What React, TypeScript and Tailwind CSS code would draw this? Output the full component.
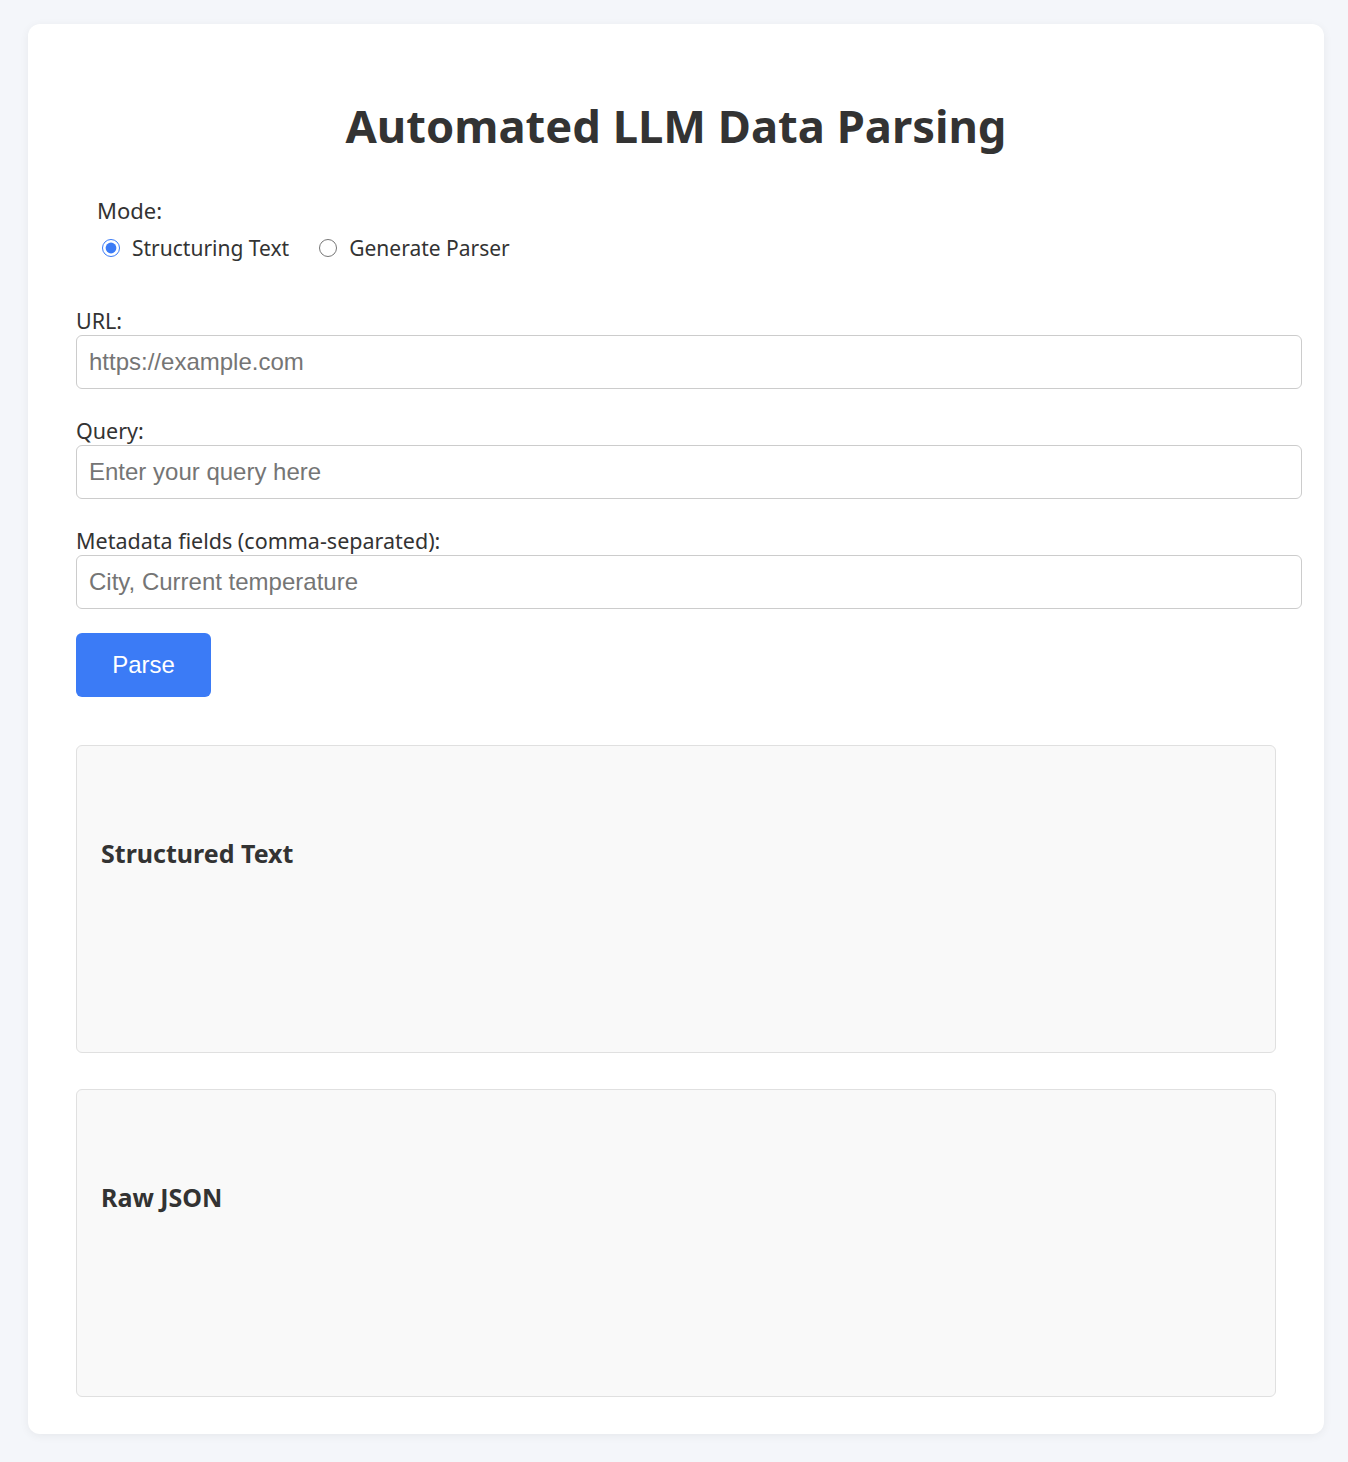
import React from "react";

export default function App() {
  const ui = { fontFamily: '"Noto Sans", "Open Sans", sans-serif' };
  const arial = { fontFamily: '"Liberation Sans", Arial, sans-serif' };
  const fields = [
    ["URL:", "https://example.com"],
    ["Query:", "Enter your query here"],
    ["Metadata fields (comma-separated):", "City, Current temperature"],
  ];
  return (
    <div className="min-h-[1462px] bg-[#f4f6fa] pt-[24px] pl-[28px] pr-[24px] pb-[28px]" style={ui}>
      <div className="bg-white rounded-[12px] shadow-[0_2px_10px_rgba(0,0,0,0.06)] px-[48px] pt-[75px] pb-[37px] text-[#333]">
        <h1 className="text-center text-[45.3px] font-bold leading-[1.2] text-[#333] mb-[43px]">Automated LLM Data Parsing</h1>
        <div className="pl-[21px] mb-[45px]">
          <div className="text-[22px] leading-[28px] mb-[10px]">Mode:</div>
          <div className="flex items-center text-[21px] leading-[28px]">
            <label className="flex items-center">
              <input type="radio" name="mode" defaultChecked className="w-[18px] h-[18px] ml-[5px] mr-[12px] accent-[#3b7bf6]" />
              <span>Structuring Text</span>
            </label>
            <label className="flex items-center ml-[30px]">
              <input type="radio" name="mode" className="w-[18px] h-[18px] mr-[12px] accent-[#3b7bf6]" />
              <span>Generate Parser</span>
            </label>
          </div>
        </div>
        <div className="flex flex-col gap-[28px]">
          {fields.map(([l, p]) => (
            <div key={l}>
              <div className="text-[21.5px] leading-[28px]">{l}</div>
              <input
                placeholder={p}
                className="box-content w-full h-[28px] px-[12px] py-[12px] border border-[#ccc] rounded-[6px] text-[24px] placeholder:text-[#757575] outline-none"
                style={arial}
              />
            </div>
          ))}
        </div>
        <button
          className="mt-[24px] w-[135px] h-[64px] bg-[#3b7bf6] text-white text-[24px] rounded-[6px]"
          style={arial}
        >
          Parse
        </button>
        <div className="mt-[48px] flex flex-col gap-[36px]">
          {["Structured Text", "Raw JSON"].map((t) => (
            <div key={t} className="h-[308px] bg-[#f9f9f9] border border-[#e0e0e0] rounded-[6px] px-[24px] pt-[90px]">
              <h3 className="text-[25px] font-bold leading-[34px] text-[#333]">{t}</h3>
            </div>
          ))}
        </div>
      </div>
    </div>
  );
}
